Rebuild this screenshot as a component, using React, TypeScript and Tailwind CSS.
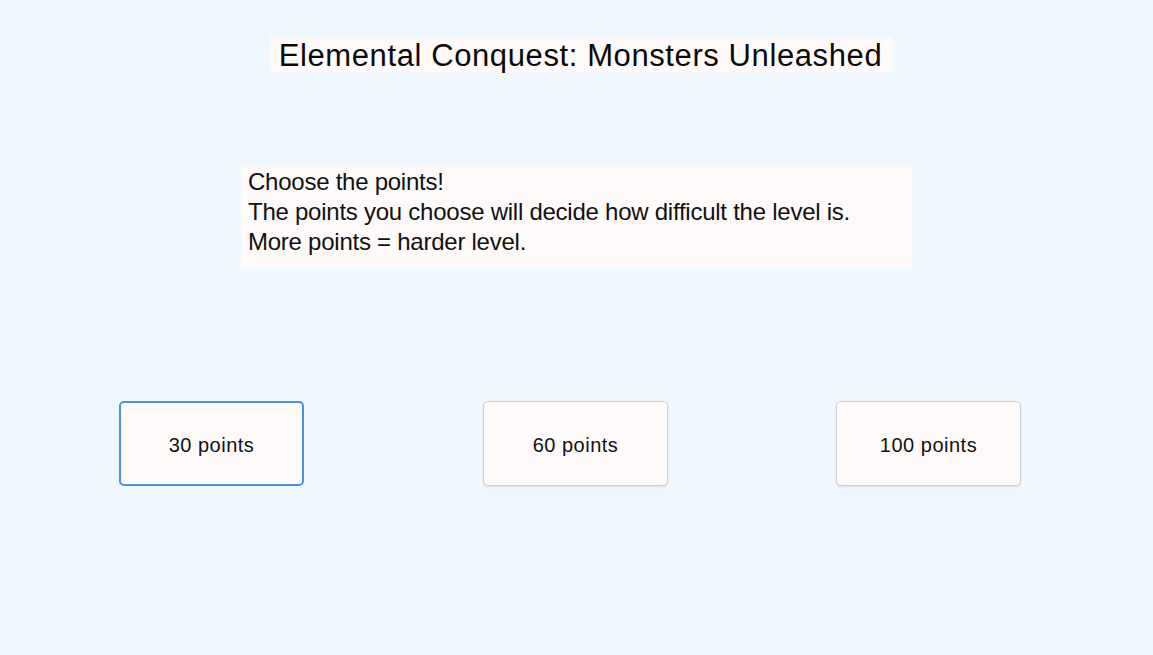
import React from "react";

const options = [
  { label: "30 points", ml: "ml-[119px]", active: true },
  { label: "60 points", ml: "ml-[179px]", active: false },
  { label: "100 points", ml: "ml-[168px]", active: false },
];

export default function App() {
  return (
    <div className="w-[1153px] h-[655px] bg-[#f0f8ff] font-['Liberation_Sans',Arial,sans-serif] text-black overflow-hidden">
      <div className="flex justify-center pt-[37px] pl-[8px]">
        <h1 className="bg-[#fffafa] h-[36px] px-[10px] text-[31px] leading-[37px] tracking-[0.6px] text-[#0a0a0a]">
          Elemental Conquest: Monsters Unleashed
        </h1>
      </div>
      <div className="ml-[241px] mt-[92px] w-[671px] h-[103px] bg-[#fffafa] px-[7px] pt-[2px] text-[24px] leading-[30px] tracking-[-0.25px] text-[#111]">
        <p>Choose the points!</p>
        <p>The points you choose will decide how difficult the level is.</p>
        <p>More points = harder level.</p>
      </div>
      <div className="flex mt-[133px]">
        {options.map((o) => (
          <button
            key={o.label}
            className={`${o.ml} w-[185px] h-[85px] pt-[3px] rounded-[5px] bg-[#fffafa] text-[20px] tracking-[0.5px] text-[#111] ${
              o.active
                ? "border-2 border-[#4a93e0]"
                : "border border-[#cfcfcf] shadow-[0_1px_2px_rgba(0,0,0,0.12)]"
            }`}
          >
            {o.label}
          </button>
        ))}
      </div>
    </div>
  );
}
